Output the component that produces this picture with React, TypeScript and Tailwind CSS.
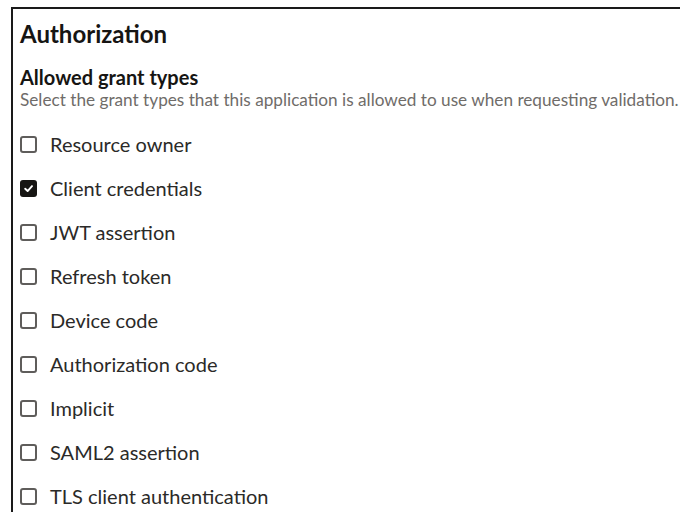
const grantTypes = [
  { label: "Resource owner", checked: false },
  { label: "Client credentials", checked: true },
  { label: "JWT assertion", checked: false },
  { label: "Refresh token", checked: false },
  { label: "Device code", checked: false },
  { label: "Authorization code", checked: false },
  { label: "Implicit", checked: false },
  { label: "SAML2 assertion", checked: false },
  { label: "TLS client authentication", checked: false },
];

function Checkbox({ checked }: { checked: boolean }) {
  return checked ? (
    <span className="flex items-center justify-center w-[17px] h-[17px] rounded-[3px] bg-[#161513]">
      <svg width="11" height="11" viewBox="0 0 10 10" fill="none">
        <path
          d="M2 5.2 L4.2 7.3 L8.2 2.8"
          stroke="#fff"
          strokeWidth="1.7"
          strokeLinecap="round"
          strokeLinejoin="round"
        />
      </svg>
    </span>
  ) : (
    <span className="w-[17px] h-[17px] rounded-[3px] border-2 border-[#5f5d5b] bg-white" />
  );
}

export default function App() {
  return (
    <div className="w-[680px] h-[512px] bg-white overflow-hidden pt-[7px] pl-[11px] font-['Lato',sans-serif]">
      <section className="h-full border-t-2 border-l-2 border-[#1a1a1a] pl-[7px] pt-[11px]">
        <h1 className="text-[24px] font-bold leading-[28px] text-[#161513]">
          Authorization
        </h1>
        <h2 className="mt-[17px] text-[20px] font-bold leading-[24px] text-[#161513]">
          Allowed grant types
        </h2>
        <p className="text-[17.2px] leading-[22px] text-[#6f6c69] whitespace-nowrap">
          Select the grant types that this application is allowed to use when
          requesting validation.
        </p>
        <ul className="mt-[22px] flex flex-col gap-[22px]">
          {grantTypes.map((g) => (
            <li key={g.label} className="flex items-center gap-[13px] h-[22px]">
              <Checkbox checked={g.checked} />
              <span className="text-[20px] leading-[22px] text-[#2b2a28]">
                {g.label}
              </span>
            </li>
          ))}
        </ul>
      </section>
    </div>
  );
}
